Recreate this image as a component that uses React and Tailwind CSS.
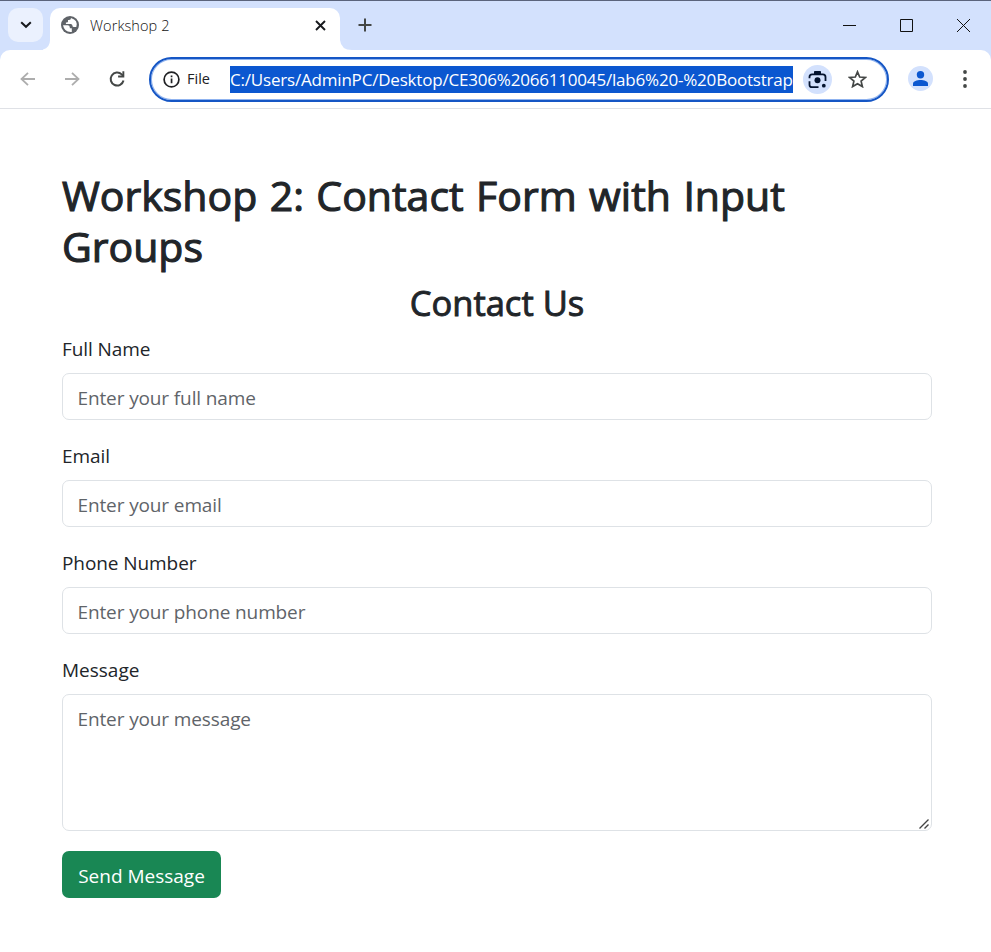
const fields = [
  { label: "Full Name", placeholder: "Enter your full name" },
  { label: "Email", placeholder: "Enter your email" },
  { label: "Phone Number", placeholder: "Enter your phone number" },
];

function TabStrip() {
  return (
    <div className="flex h-[50px] border-t border-[#5b647c] bg-[#d3e1fd]">
      <div className="ml-2 mt-[7px] flex h-[34px] w-[35px] items-center justify-center rounded-[10px] bg-[#ebf1fe]">
        <svg width="12" height="12" viewBox="0 0 12 12" fill="none" stroke="#17191d" strokeWidth="2">
          <path d="M1.200 3.200 6 7.800l4.800-4.600" />
        </svg>
      </div>
      <svg className="mt-[39px]" width="7" height="10" viewBox="0 0 7 10"><path d="M7 0v10H-5Q7 10 7 0Z" fill="#fff" /></svg>
      <div className="mt-[7px] flex h-[42px] w-[290px] items-center rounded-t-[10px] bg-white pb-[8px] pl-[11px]">
        <svg width="18" height="18" viewBox="0 0 18 18">
          <circle cx="9" cy="9" r="9" fill="#5f6368" />
          <path d="M2 9.300h4.600q2.200 0 2.200 2v1h2v3.700Q3.500 16.700 2 9.300ZM10 2q0 1.900-1.900 1.900H7v1.700q0 1-1.200 1H4.900v1.300h4.900q1.600 0 1.600 1.700 0 1.500 1.500 1.500h2.400Q17.400 4.200 10 2Z" fill="#fff" />
        </svg>
        <span className="ml-[11px] mt-px text-[14.500px] font-light tracking-[0.1px] text-[#111]">Workshop 2</span>
        <svg className="ml-auto mr-[14px]" width="11" height="11" viewBox="0 0 11 11" stroke="#17191d" strokeWidth="1.900">
          <path d="m1 1 9 9M10 1l-9 9" />
        </svg>
      </div>
      <svg className="mt-[39px]" width="12" height="10" viewBox="0 0 12 10"><path d="M0 0v10H12Q1 10 0 0Z" fill="#fff" /></svg>
      <svg className="ml-[6px] mt-[17px]" width="14" height="14" viewBox="0 0 14 14" stroke="#444746" strokeWidth="2">
        <path d="M7 .5v13M.5 7h13" />
      </svg>
      <svg className="ml-auto mr-[20px] mt-[17px]" width="129" height="15" viewBox="0 0 129 15" fill="none" stroke="#111" strokeWidth="1">
        <path d="M1 7.500h13M58.500 1.500h12v12h-12z" />
        <path d="m115 1 13 13M128 1l-13 13" />
      </svg>
    </div>
  );
}

function Toolbar() {
  return (
    <div className="bg-[#d3e1fd]">
      <div className="flex h-[59px] items-center rounded-t-[10px] border-b border-[#dfe1e6] bg-white">
        <svg className="ml-5" width="60" height="14" viewBox="0 0 60 14" fill="none" stroke="#adadad" strokeWidth="1.800">
          <path d="M15 7H1.500M8 .8 1.500 7 8 13.200M45 7h13.500M52 .8 58.500 7 52 13.200" />
        </svg>
        <svg className="ml-[28px]" width="18" height="18" viewBox="0 0 18 18" fill="none">
          <path d="M15.500 10.500A6.500 6.500 0 1 1 13.700 4.400L15.500 6.200" stroke="#444746" strokeWidth="2" />
          <path d="M16.300 1.300v6.200h-6.200v-1.900h4.300V1.300z" fill="#444746" />
        </svg>
        <div className="ml-[23px] flex h-[45px] w-[740px] items-center rounded-full border-2 border-[#1556c5] pl-3 ring-1 ring-inset ring-[#8fb3f0]">
          <svg width="17" height="17" viewBox="0 0 17 17" fill="none">
            <circle cx="8.500" cy="8.500" r="7.400" stroke="#202124" strokeWidth="1.700" />
            <path d="M7.700 7.600h1.700v4.700H7.700zM7.700 4.600h1.700v1.700H7.700z" fill="#202124" />
          </svg>
          <span className="ml-[7px] w-[43px] text-[14.500px] text-[#202124]">File</span>
          <div className="flex h-[27px] w-[563px] items-center whitespace-nowrap bg-[#0b57d0] pt-px text-[17px] tracking-[-0.195px] text-white">
            C:/Users/AdminPC/Desktop/CE306%2066110045/lab6%20-%20Bootstrap
          </div>
          <div className="ml-[10px] flex size-[29px] items-center justify-center rounded-full bg-[#d3e1fd]">
            <svg width="19" height="19" viewBox="0 0 19 19" fill="none" stroke="#04132f" strokeWidth="1.800">
              <path d="M1.500 8.300V6.900Q1.500 4.300 4.100 4.300H14.900Q17.500 4.300 17.500 6.900V11M1.500 11.300v3.400q0 2.500 2.500 2.500H10.500" />
              <path d="M6 4V1.700Q6 1 6.700 1h5.600q.7 0 .7.700V4z" fill="#04132f" stroke="none" />
              <circle cx="9.500" cy="10.300" r="3" fill="#04132f" stroke="none" />
              <circle cx="15.800" cy="15.700" r="1.900" fill="#04132f" stroke="none" />
            </svg>
          </div>
          <svg className="ml-[16px]" width="19" height="18" viewBox="0 0 19 18" fill="none" stroke="#444746" strokeWidth="1.700">
            <path d="m9.500 1.800 2.200 5.200 5.600.5-4.200 3.600 1.300 5.500-4.900-2.900-4.900 2.900 1.300-5.500L1.700 7.500l5.600-.5Z" />
          </svg>
        </div>
        <div className="mb-[2px] ml-[19px] flex size-[25px] items-center justify-center rounded-full bg-[#d3e1fd]">
          <svg width="15" height="15" viewBox="0 0 15 15" fill="#0b57d0">
            <circle cx="7.500" cy="3.700" r="3.700" />
            <path d="M0 15v-2.300C0 10 4 8.900 7.500 8.900s7.500 1.100 7.500 3.800V15z" />
          </svg>
        </div>
        <svg className="ml-[30px]" width="4" height="18" viewBox="0 0 4 18" fill="#444746">
          <circle cx="2" cy="2" r="1.900" /><circle cx="2" cy="9" r="1.900" /><circle cx="2" cy="16" r="1.900" />
        </svg>
      </div>
    </div>
  );
}

export default function App() {
  return (
    <div className="h-[952px] overflow-hidden bg-white font-['Open_Sans',sans-serif] text-[#212529]">
      <TabStrip />
      <Toolbar />
      <main className="pl-[62px] pr-[59px] pt-[61px]">
        <h1 className="text-[41px] leading-[51px] [word-spacing:1.800px] [-webkit-text-stroke:1.100px_#212529]">
          Workshop 2: Contact Form with Input
          <br />
          Groups
        </h1>
        <h2 className="mt-[10px] text-center text-[34.500px] leading-[42px] [-webkit-text-stroke:0.900px_#212529]">Contact Us</h2>
        <form className="mt-[10px] text-[19px] leading-[30px]">
          {fields.map((f) => (
            <div key={f.label} className="mb-[21px]">
              <label className="block tracking-[-0.080px]">{f.label}</label>
              <div className="mt-[9px] h-[47px] rounded-[7px] border border-[#dee2e6] px-[14.500px] pt-[9px] tracking-[-0.120px] text-[#5f6469]">
                {f.placeholder}
              </div>
            </div>
          ))}
          <label className="block">Message</label>
          <div className="relative mt-[9px] h-[137px] rounded-[7px] border border-[#dee2e6] px-[14.500px] pt-[9px] tracking-[-0.120px] text-[#5f6469]">
            Enter your message
            <svg className="absolute right-[2px] bottom-[1px]" width="10" height="10" viewBox="0 0 10 10" stroke="#444" strokeWidth="1.400">
              <path d="M.5 9.500l9-9M5.500 9.500l4-4" />
            </svg>
          </div>
          <button className="mt-5 block h-[47px] w-[159px] rounded-[7px] bg-[#198754] pt-[2px] text-white">Send Message</button>
        </form>
      </main>
    </div>
  );
}
